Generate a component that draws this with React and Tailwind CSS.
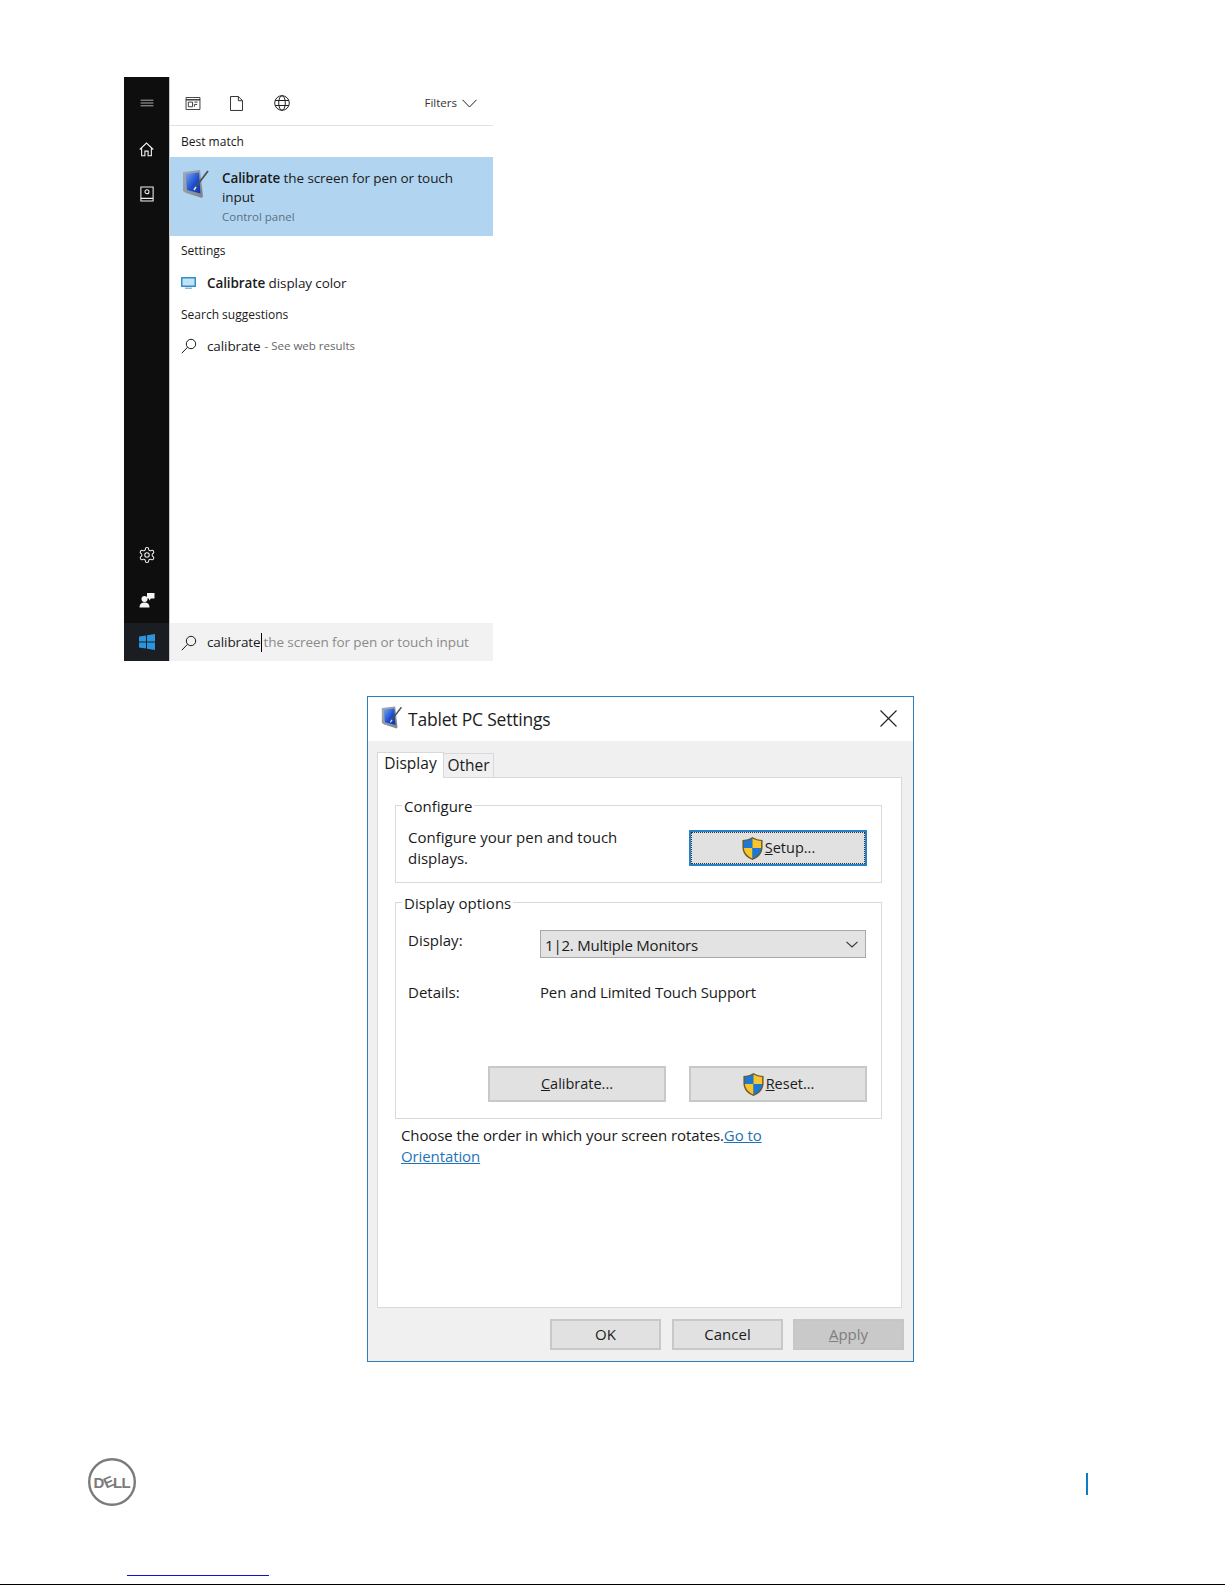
import React from "react";

const TabletIcon = ({ className }) => (
  <svg viewBox="0 0 28 30" className={className}>
    <defs>
      <linearGradient id="scr" x1="0" y1="0" x2="1" y2="1">
        <stop offset="0" stopColor="#7aa6ee" />
        <stop offset="0.55" stopColor="#1c4fd0" />
        <stop offset="1" stopColor="#1233a0" />
      </linearGradient>
      <linearGradient id="frm" x1="0" y1="0" x2="1" y2="1">
        <stop offset="0" stopColor="#a3adb6" />
        <stop offset="1" stopColor="#7a858f" />
      </linearGradient>
    </defs>
    <path d="M1 3 L18 1 L21 27 L20 29 L4 24 L1 22 Z" fill="url(#frm)" />
    <path d="M3.500 5 L17 3.500 L18.500 24.500 L5 21 Z" fill="url(#scr)" />
    <path d="M13 19 L26 2" stroke="#4d4f52" strokeWidth="1.800" fill="none" />
    <path d="M12 21 L14 18" stroke="#e8e8e8" strokeWidth="1.500" fill="none" />
  </svg>
);

const Shield = ({ className }) => (
  <svg viewBox="0 0 24 26" className={className}>
    <path d="M12 1 C9 3 5 4 1.500 4 L1.500 12 C1.500 18 6 23 12 25 C18 23 22.500 18 22.500 12 L22.500 4 C19 4 15 3 12 1 Z" fill="#6f5a26" />
    <path d="M12 2.500 C9 4 6 5 3 5.200 L3 12.500 L12 12.500 Z" fill="#1a78d6" />
    <path d="M12 2.500 C15 4 18 5 21 5.200 L21 12.500 L12 12.500 Z" fill="#f7c52e" />
    <path d="M3 12.500 L12 12.500 L12 23.400 C7 21.500 3.400 17.500 3 12.500 Z" fill="#f7c52e" />
    <path d="M21 12.500 L12 12.500 L12 23.400 C17 21.500 20.600 17.500 21 12.500 Z" fill="#1a78d6" />
  </svg>
);

const SearchGlyph = () => (
  <svg viewBox="0 0 16 16" className="h-4 w-4" fill="none" stroke="#1a1a1a" strokeWidth="1">
    <circle cx="10" cy="6" r="4.700" />
    <path d="M6.500 9.300 L0.800 15.200" />
  </svg>
);

const Btn = ({ className, children }) => (
  <div className={`flex items-center justify-center bg-[#e1e1e1] border-2 border-[#c8c8c8] text-[#1c1c1c] ${className}`}>
    {children}
  </div>
);

const Legend = ({ children }) => (
  <span className="absolute left-[6px] top-[-10px] bg-white px-[2px] leading-[21px]">{children}</span>
);

export default function App() {
  return (
    <div className="w-[1225px] h-[1585px] bg-white overflow-hidden flex flex-col font-['Open_Sans',sans-serif] text-[#1a1a1a]">
      {/* Search panel */}
      <div className="ml-[124px] mt-[77px] flex h-[584px] w-[369px]">
        <div className="flex w-[45px] flex-col items-center bg-[#0e0e0e] text-white">
          <div className="flex h-[52px] items-center">
            <svg viewBox="0 0 16 10" className="h-[8px] w-[16px]" stroke="#e8e8e8" strokeWidth="0.900">
              <path d="M0 1.500H16M0 5H16M0 8.500H16" />
            </svg>
          </div>
          <div className="flex h-[40px] items-center">
            <svg viewBox="0 0 16 16" className="h-[15px] w-[15px]" fill="none" stroke="#f0f0f0" strokeWidth="1.200">
              <path d="M0.800 8 L8 1.200 L15.200 8 M2.800 6.500 V14.700 H6.300 V9.700 H9.700 V14.700 H13.200 V6.500" />
            </svg>
          </div>
          <div className="flex h-[50px] items-center">
            <svg viewBox="0 0 16 18" className="h-[16px] w-[14px]" fill="none" stroke="#f0f0f0" strokeWidth="1.200">
              <path d="M1 1 H15 V17 H1 Z M1 14 H15" />
              <circle cx="8" cy="6.500" r="2.300" />
            </svg>
          </div>
          <div className="flex-1" />
          <div className="flex h-[46px] items-center">
            <svg viewBox="0 0 24 24" className="h-[18px] w-[18px]" fill="none" stroke="#eeeeee" strokeWidth="1.400">
              <path d="M12.220 2h-.44a2 2 0 0 0-2 2v.18a2 2 0 0 1-1 1.730l-.43.250a2 2 0 0 1-2 0l-.150-.080a2 2 0 0 0-2.730.730l-.220.380a2 2 0 0 0 .730 2.730l.150.100a2 2 0 0 1 1 1.720v.510a2 2 0 0 1-1 1.740l-.150.090a2 2 0 0 0-.730 2.730l.220.380a2 2 0 0 0 2.730.730l.150-.080a2 2 0 0 1 2 0l.430.250a2 2 0 0 1 1 1.730V20a2 2 0 0 0 2 2h.440a2 2 0 0 0 2-2v-.180a2 2 0 0 1 1-1.730l.430-.250a2 2 0 0 1 2 0l.150.080a2 2 0 0 0 2.730-.730l.220-.390a2 2 0 0 0-.730-2.730l-.150-.080a2 2 0 0 1-1-1.740v-.500a2 2 0 0 1 1-1.740l.150-.090a2 2 0 0 0 .730-2.730l-.220-.380a2 2 0 0 0-2.730-.730l-.150.080a2 2 0 0 1-2 0l-.430-.250a2 2 0 0 1-1-1.730V4a2 2 0 0 0-2-2z" />
              <circle cx="12" cy="12" r="3" />
            </svg>
          </div>
          <div className="flex h-[45px] items-start pt-[14px]">
            <svg viewBox="0 0 16 16" className="h-[16px] w-[16px]" fill="#f4f4f4">
              <circle cx="5.500" cy="7" r="3" />
              <path d="M0.500 15.500 C0.500 11.500 3 10.500 5.500 10.500 C8 10.500 10.500 11.500 10.500 15.500 Z" />
              <path d="M8 1 H15.500 V6.500 H12 L10 8.500 V6.500 H8 Z" />
            </svg>
          </div>
          <div className="flex h-[38px] w-full items-center justify-center bg-[#1a1e22]">
            <svg viewBox="0 0 16 16" className="h-[16px] w-[16px]" fill="#2a95de">
              <path d="M0 2.400 L7 1.400 V7.600 H0 Z M8 1.200 L16 0 V7.600 H8 Z M0 8.400 H7 V14.600 L0 13.600 Z M8 8.400 H16 V16 L8 14.800 Z" />
            </svg>
          </div>
        </div>

        <div className="flex flex-1 flex-col border-l border-[#c9c9c9]">
          <div className="flex h-[49px] items-center border-b border-[#e2e2e2] pl-[15px] pr-[16px] pt-[4px]">
            <svg viewBox="0 0 16 14" className="h-[13px] w-[16px]" fill="none" stroke="#333333" strokeWidth="1">
              <path d="M0.500 0.500 H15.500 V13.500 H0.500 Z" />
              <path d="M0.500 3 H15.500" strokeWidth="1.500" />
              <path d="M3 5.500 H7.500 V10.500 H3 Z M9.500 5.500 H13 M9.500 8 H12.500 M9.500 8 V10.500" />
            </svg>
            <svg viewBox="0 0 14 16" className="ml-[29px] h-[15px] w-[13px]" fill="none" stroke="#222222" strokeWidth="1">
              <path d="M0.500 0.500 H9 L13.500 5 V15.500 H0.500 Z M9 0.500 V5 H13.500" />
            </svg>
            <svg viewBox="0 0 16 16" className="ml-[31px] h-[16px] w-[16px]" fill="none" stroke="#222222" strokeWidth="1">
              <circle cx="8" cy="8" r="7.300" />
              <ellipse cx="8" cy="8" rx="3.300" ry="7.300" />
              <path d="M1.200 5.500 H14.800 M1.200 10.500 H14.800" />
            </svg>
            <span className="ml-auto text-[11.500px] text-[#333333]">Filters</span>
            <svg viewBox="0 0 15 9" className="ml-[5px] h-[9px] w-[15px]" fill="none" stroke="#222222" strokeWidth="1">
              <path d="M0.500 0.800 L7.500 8 L14.500 0.800" />
            </svg>
          </div>

          <div className="flex h-[31px] items-center pl-[11px] text-[12px]">Best match</div>

          <div className="flex h-[79px] bg-[#b1d5f1] pl-[12px]">
            <TabletIcon className="mt-[12px] h-[30px] w-[28px]" />
            <div className="ml-[12px] pt-[12px] text-[13.500px] tracking-[-0.1px] leading-[19px]">
              <div className="whitespace-nowrap">
                <b className="font-semibold">Calibrate</b> the screen for pen or touch
              </div>
              <div>input</div>
              <div className="text-[11.500px] tracking-normal text-[#5b6f80]">Control panel</div>
            </div>
          </div>

          <div className="flex h-[30px] items-center pl-[11px] text-[12px]">Settings</div>

          <div className="flex h-[34px] items-center pl-[11px]">
            <svg viewBox="0 0 15 13" className="h-[13px] w-[15px]">
              <rect x="0" y="0" width="15" height="10" fill="#2f8fca" />
              <rect x="1.500" y="1.500" width="12" height="7" fill="#bfe3f7" />
              <rect x="4" y="10.500" width="7" height="1.500" fill="#9ab7c9" />
            </svg>
            <span className="ml-[11px] text-[13.500px] tracking-[-0.1px]">
              <b className="font-semibold">Calibrate</b> display color
            </span>
          </div>

          <div className="flex h-[30px] items-center pl-[11px] text-[12px]">Search suggestions</div>

          <div className="flex h-[32px] items-center pl-[11px]">
            <SearchGlyph />
            <span className="ml-[10px] text-[13.500px] tracking-[-0.1px]">calibrate</span>
            <span className="ml-[4px] text-[11.500px] text-[#666666]">- See web results</span>
          </div>

          <div className="flex-1" />

          <div className="flex h-[38px] items-center bg-[#f2f2f2] pl-[11px] pt-[1px] text-[13.500px] tracking-[-0.1px]">
            <SearchGlyph />
            <span className="ml-[10px]">calibrate</span>
            <span className="h-[19px] w-px bg-black" />
            <span className="ml-[2px] text-[#8a8a8a]">the screen for pen or touch input</span>
          </div>
        </div>
      </div>

      {/* Dialog */}
      <div className="ml-[367px] mt-[35px] flex h-[666px] w-[547px] flex-col border border-[#2a7fc0] text-[15px]">
        <div className="flex h-[44px] items-center bg-white pl-[13px] pr-[16px]">
          <TabletIcon className="mb-[4px] h-[25px] w-[22px]" />
          <span className="ml-[5px] text-[17.500px] tracking-[-0.2px] text-[#1c1c1c]">Tablet PC Settings</span>
          <svg viewBox="0 0 17 17" className="ml-auto mb-[2px] h-[17px] w-[17px]" fill="none" stroke="#222222" strokeWidth="1.100">
            <path d="M0.500 0.500 L16.500 16.500 M16.500 0.500 L0.500 16.500" />
          </svg>
        </div>

        <div className="flex flex-1 flex-col bg-[#f0f0f0] pl-[9px] pr-[9px]">
          <div className="mt-[11px] flex h-[25px] items-end text-[15.500px]">
            <div className="relative z-10 mb-[-1px] flex h-[26px] w-[67px] items-center justify-center border border-b-0 border-[#d9d9d9] bg-white pb-[3px]">
              Display
            </div>
            <div className="flex h-[24px] w-[50px] items-center justify-center border border-b-0 border-l-0 border-[#d9d9d9] bg-[#f0f0f0]">
              Other
            </div>
          </div>

          <div className="mr-[2px] flex h-[531px] flex-col border border-[#d9d9d9] bg-white pl-[17px]">
            <div className="relative mt-[27px] flex h-[78px] w-[487px] items-center justify-between border border-[#d9d9d9] pl-[12px] pr-[14px] pt-[8px]">
              <Legend>Configure</Legend>
              <div className="leading-[21px]">
                Configure your pen and touch
                <br />
                displays.
              </div>
              <Btn className="h-[36px] w-[178px] !border-[#2a82c6] outline-1 outline-dotted outline-offset-[-3px] outline-[#333333]">
                <Shield className="h-[25px] w-[23px]" />
                <span className="ml-[1px] text-[14.500px]">
                  <u>S</u>etup...
                </span>
              </Btn>
            </div>

            <div className="relative mt-[19px] flex h-[217px] w-[487px] flex-col border border-[#d9d9d9] pl-[12px] pr-[14px] pt-[27px]">
              <Legend>Display options</Legend>
              <div className="flex h-[28px] items-start">
                <span className="w-[132px] leading-[21px]">Display:</span>
                <div className="mr-[1px] flex h-[28px] flex-1 items-center justify-between border border-[#a8a8a8] bg-[#e3e3e3] pl-[4px] pr-[7px]">
                  <span className="mt-[2px] tracking-[-0.2px]">1|2. Multiple Monitors</span>
                  <svg viewBox="0 0 12 7" className="h-[7px] w-[12px]" fill="none" stroke="#333333" strokeWidth="1.100">
                    <path d="M0.500 0.800 L6 6 L11.500 0.800" />
                  </svg>
                </div>
              </div>
              <div className="mt-[22px] flex leading-[24px]">
                <span className="w-[132px]">Details:</span>
                <span className="tracking-[-0.15px]">Pen and Limited Touch Support</span>
              </div>
              <div className="mb-[16px] mt-auto flex justify-end gap-[23px]">
                <Btn className="h-[36px] w-[178px]">
                  <span className="text-[14.500px]">
                    <u>C</u>alibrate...
                  </span>
                </Btn>
                <Btn className="h-[36px] w-[178px]">
                  <Shield className="h-[25px] w-[23px]" />
                  <span className="ml-[1px] text-[14.500px]">
                    <u>R</u>eset...
                  </span>
                </Btn>
              </div>
            </div>

            <div className="ml-[6px] mt-[6px] leading-[21px] tracking-[-0.1px]">
              Choose the order in which your screen rotates.
              <u className="text-[#1f72b8]">Go to</u>
              <br />
              <u className="text-[#1f72b8]">Orientation</u>
            </div>
          </div>

          <div className="mt-[11px] flex justify-end gap-[11px]">
            <Btn className="h-[31px] w-[111px]">OK</Btn>
            <Btn className="h-[31px] w-[111px]">Cancel</Btn>
            <Btn className="ml-[-1px] h-[31px] w-[111px] !border-[#c6c6c6] !bg-[#c9c9c9] !text-[#7e7e7e]">
              <span>
                <u>A</u>pply
              </span>
            </Btn>
          </div>
        </div>
      </div>

      {/* Footer */}
      <div className="ml-[88px] mt-[96px] flex h-[48px] w-[1000px] justify-between">
        <svg viewBox="0 0 48 48" className="h-[48px] w-[48px]">
          <circle cx="24" cy="24" r="22.800" fill="none" stroke="#7b7b7b" strokeWidth="2.400" />
          <g fill="#7b7b7b" fontFamily="'Liberation Sans',sans-serif" fontWeight="700" fontSize="15">
            <text x="5.500" y="29.500">D</text>
            <text x="15.500" y="29.500" transform="rotate(-24 20 24)">E</text>
            <text x="25" y="29.500">L</text>
            <text x="33.500" y="29.500">L</text>
          </g>
        </svg>
        <div className="mt-[15px] h-[22px] w-[2px] bg-[#0a7fc4]" />
      </div>
      <div className="ml-[127px] mt-[69px] h-px w-[142px] bg-[#1010d0]" />
      <div className="mt-[8px] h-px w-full bg-black" />
    </div>
  );
}
